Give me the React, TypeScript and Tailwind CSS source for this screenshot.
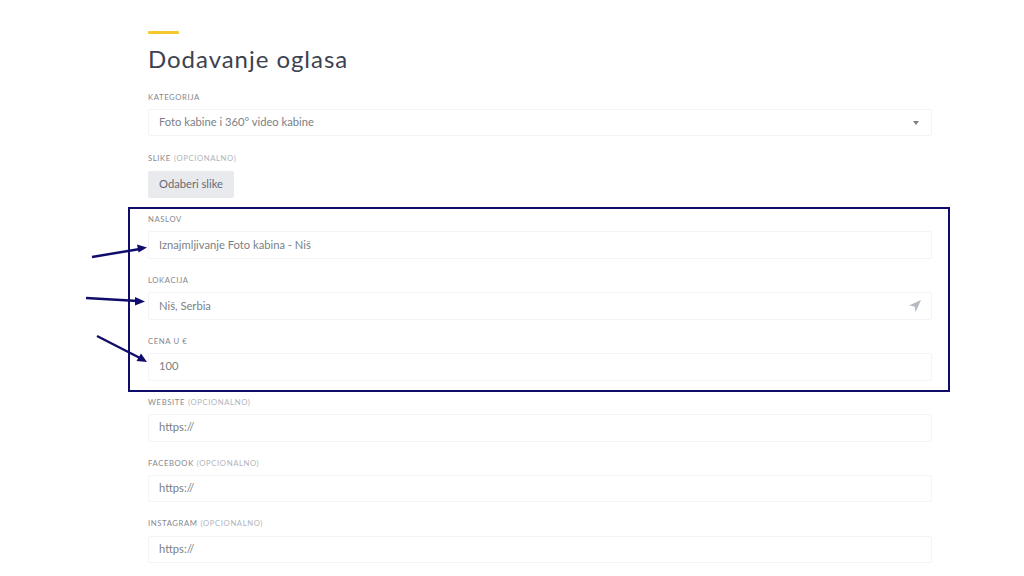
import React from "react";

type FieldProps = {
  label: string;
  optional?: boolean;
  value: string;
  icon?: React.ReactNode;
};

function Label({ label, optional }: { label: string; optional?: boolean }) {
  return (
    <div className="h-[12.8px] mb-[5.2px] flex items-center text-[7.7px] uppercase tracking-[0.08em] text-[#85888e]">
      {label}
      {optional && <span className="ml-[3px] text-[#b0b3b8]">(Opcionalno)</span>}
    </div>
  );
}

function Field({ label, optional, value, icon }: FieldProps) {
  return (
    <div className="mb-[15.4px]">
      <Label label={label} optional={optional} />
      <div className="h-[27.5px] flex items-center justify-between pl-[10px] pr-[10px] border border-[#f3f4f6] rounded-[2px] bg-white text-[11.2px] text-[#7b7f86]">
        <span>{value}</span>
        {icon}
      </div>
    </div>
  );
}

export default function App() {
  return (
    <div className="relative w-[1024px] h-[576px] overflow-hidden bg-white font-['Lato','Liberation_Sans',sans-serif]">
      <div className="w-[784px] ml-[148px] pt-[31px]">
        <div className="w-[31px] h-[3px] rounded-[1px] bg-[#f5c92e]" />
        <h1 className="mt-[10px] mb-[17px] h-[30px] leading-[30px] text-[24px] font-normal tracking-[0.04em] text-[#3c4250]">
          Dodavanje oglasa
        </h1>

        <Field
          label="Kategorija"
          value="Foto kabine i 360° video kabine"
          icon={<span className="mr-[2px] w-0 h-0 border-x-[3px] border-x-transparent border-t-[4px] border-t-[#7b7f86]" />}
        />

        <div className="mb-[15.4px]">
          <Label label="Slike" optional />
          <button className="h-[27.5px] w-[86px] rounded-[2px] bg-[#e9eaee] text-[11.2px] text-[#666a74]">
            Odaberi slike
          </button>
        </div>

        <Field label="Naslov" value="Iznajmljivanje Foto kabina - Niš" />
        <Field
          label="Lokacija"
          value="Niš, Serbia"
          icon={
            <svg width="12" height="12" viewBox="0 0 12 12">
              <path d="M12 0 L0 5.6 L5.6 6.4 L6.6 12 Z" fill="#b4bac0" />
            </svg>
          }
        />
        <Field label="Cena u €" value="100" />
        <Field label="Website" optional value="https://" />
        <Field label="Facebook" optional value="https://" />
        <Field label="Instagram" optional value="https://" />
      </div>

      {/* annotation box and arrows drawn over the form */}
      <div className="absolute left-[128px] top-[207px] w-[822px] h-[185px] border-[2.5px] border-[#100c6b] pointer-events-none" />
      <svg className="absolute left-0 top-0 pointer-events-none" width="1024" height="576" viewBox="0 0 1024 576">
        <g stroke="#100c6b" strokeWidth="2.4" fill="#100c6b">
          <line x1="92" y1="257" x2="140" y2="249" />
          <path d="M147 247.5 L137 244.5 L138.5 252.5 Z" stroke="none" />
          <line x1="86" y1="298" x2="138" y2="301" />
          <path d="M145 301.5 L135 297 L135 305.5 Z" stroke="none" />
          <line x1="97" y1="336" x2="140" y2="358" />
          <path d="M147 362 L141 353.5 L136.5 361 Z" stroke="none" />
        </g>
      </svg>
    </div>
  );
}
